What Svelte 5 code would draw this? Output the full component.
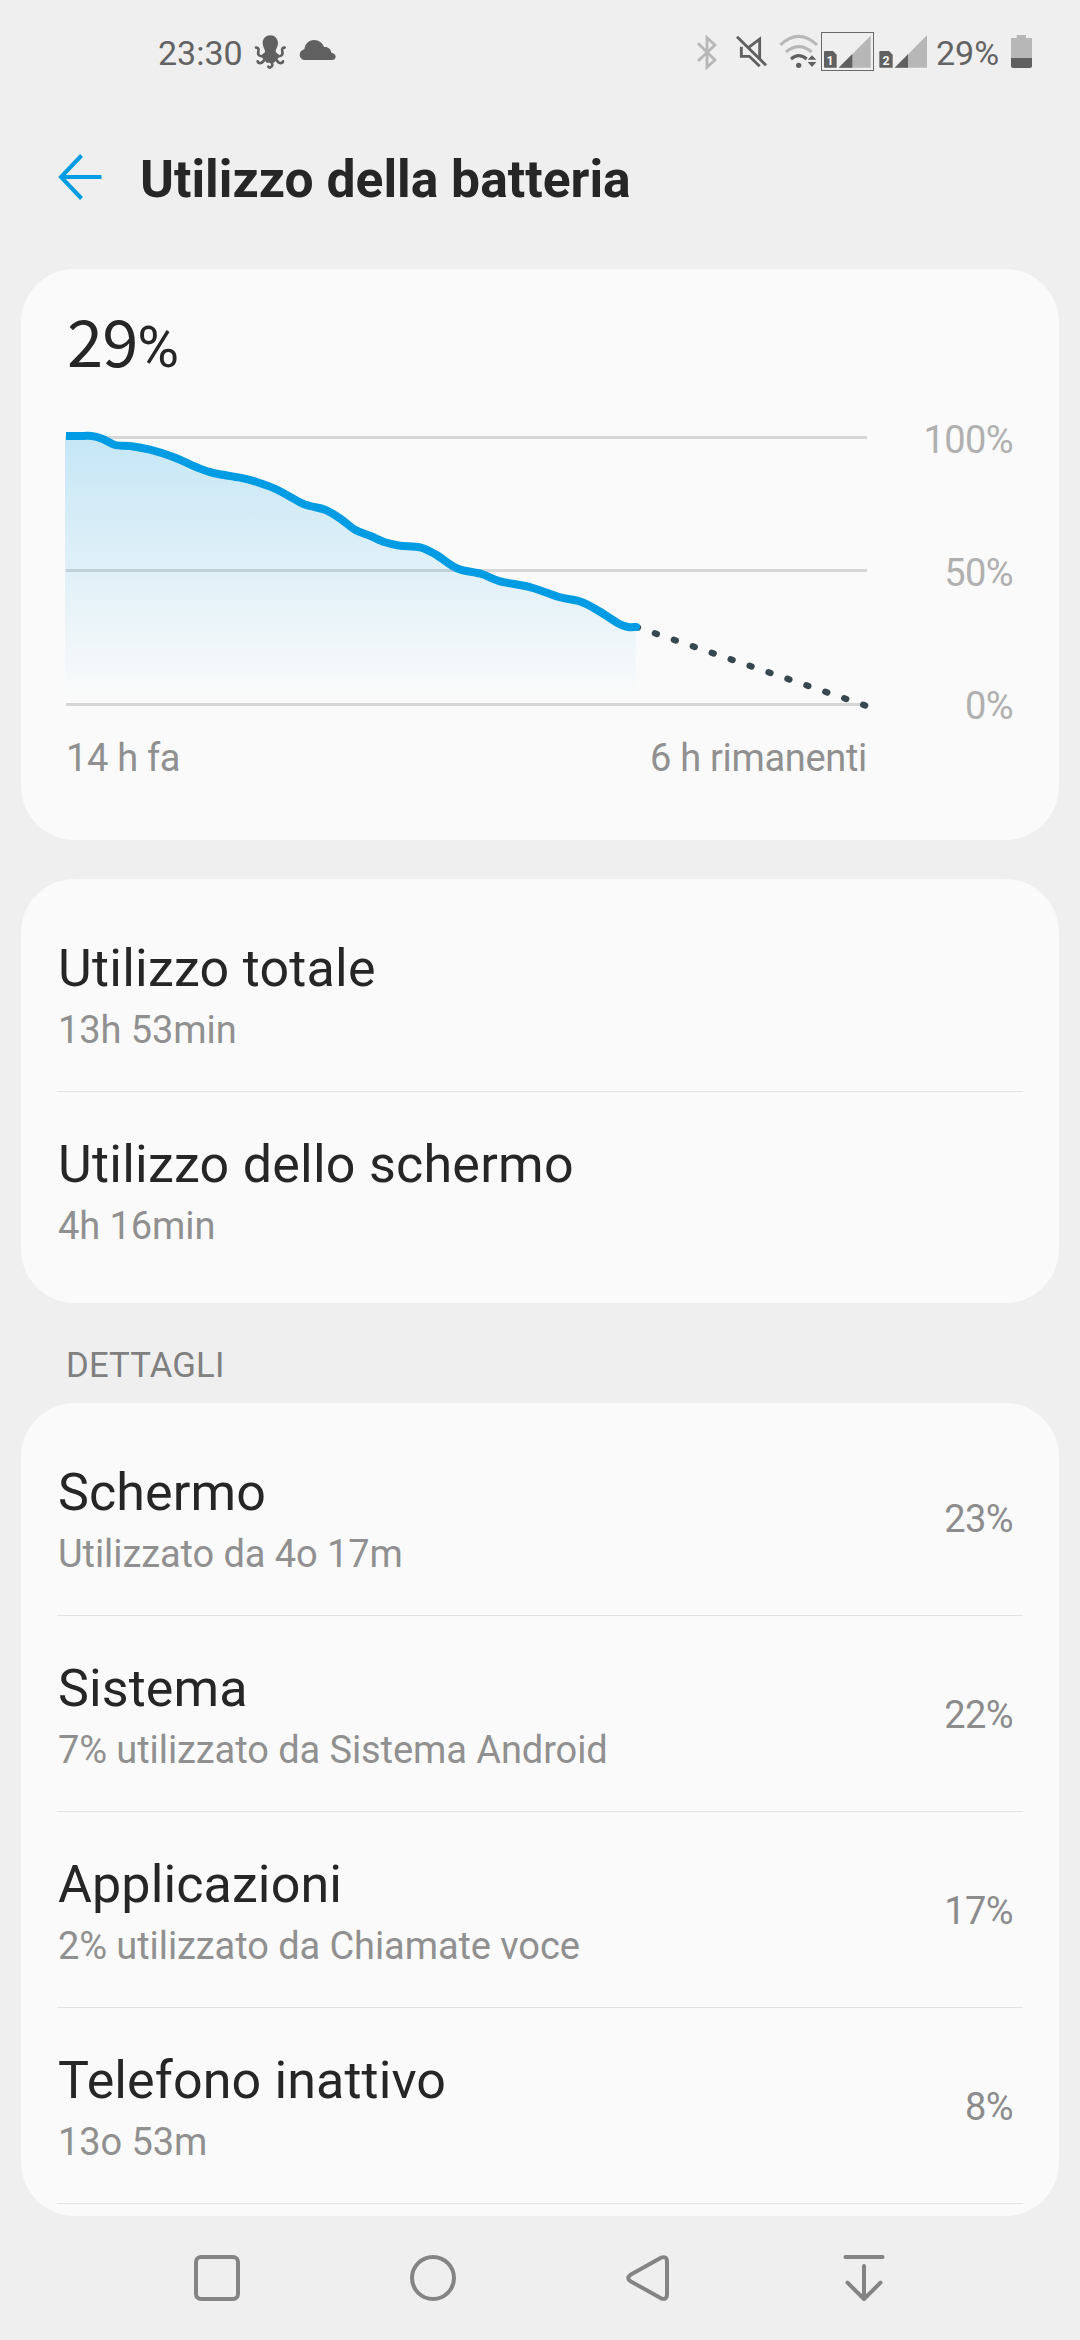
<script>
  const totals = [
    { title: 'Utilizzo totale', note: '13h 53min' },
    { title: 'Utilizzo dello schermo', note: '4h 16min' }
  ];

  const details = [
    { title: 'Schermo', note: 'Utilizzato da 4o 17m', share: '23%' },
    { title: 'Sistema', note: '7% utilizzato da Sistema Android', share: '22%' },
    { title: 'Applicazioni', note: '2% utilizzato da Chiamate voce', share: '17%' },
    { title: 'Telefono inattivo', note: '13o 53m', share: '8%' }
  ];

  // Battery level samples, in chart units
  const points = [
    [-10, 9], [12, 9], [25.5, 9], [36, 11.7], [49, 18], [64, 19], [84, 22.7], [107.3, 30],
    [130.7, 40.3], [147.3, 46], [174, 50.7], [190.7, 55], [210.7, 62.5], [234, 75.3],
    [244, 79], [259, 82.7], [274, 91.3], [289, 102.7], [304, 108.7], [319, 115.3],
    [334, 118.7], [354, 120.3], [369, 127], [387.3, 139.5], [397.3, 143.3], [415.7, 147],
    [434, 154.3], [464.7, 160.3], [493, 170], [513.5, 174.3], [530, 182.3], [552.4, 196.5],
    [562, 200], [570, 200]
  ];

  function smooth(p) {
    let d = `M${p[0][0]} ${p[0][1]}`;
    for (let i = 0; i < p.length - 1; i++) {
      const a = p[i - 1] ?? p[i];
      const b = p[i];
      const c = p[i + 1];
      const e = p[i + 2] ?? c;
      d += `C${b[0] + (c[0] - a[0]) / 6} ${b[1] + (c[1] - a[1]) / 6} ${c[0] - (e[0] - b[0]) / 6} ${c[1] - (e[1] - b[1]) / 6} ${c[0]} ${c[1]}`;
    }
    return d;
  }

  const line = smooth(points);
  const area = `${line}V276H-10Z`;
</script>

<div class="screen">
  <div class="status">
    <span class="clock">23:30</span>
    <svg class="octopus" viewBox="339 0 105 195" width="35" height="65">
      <path d="M391 46C404 46 414 56 414 70C414 80 408 86 407 93C406 98 415 102 419 107L402 128H380L363 107C368 102 377 98 375 93C374 86 368 80 368 69C368 56 378 46 391 46Z" fill="#606060" />
      <ellipse cx="391" cy="109" rx="26" ry="14" fill="#606060" />
      <g fill="none" stroke="#606060" stroke-width="8" stroke-linecap="round">
        <path d="M372 109C360 110 352 106 355 95C357 87 355 82 348 83" />
        <path d="M410 109C422 110 430 106 427 95C425 87 427 82 434 83" />
        <path d="M380 116C371 117 371 127 363 129C357 130 354 128 353 124" />
        <path d="M402 116C411 117 411 127 419 129C425 130 428 128 429 124" />
        <path d="M391 116C389 126 398 128 397 135C396 142 388 145 385 140" />
      </g>
    </svg>
    <svg class="cloud" viewBox="477 0 114 195" width="38" height="65">
      <path d="M497 120C486 120 479 113 479 104C479 96 485 90 493 88C495 72 506 60 522 60C537 60 548 69 552 81C564 79 573 88 574 98C582 99 587 104 587 110C587 116 582 120 576 120Z" fill="#606060" />
    </svg>
    <div class="system">
      <svg viewBox="51 0 60 195" width="20" height="65">
        <path d="M54 70L105 120L81 142V53L105 75L54 123" fill="none" stroke="#b7b7b7" stroke-width="8.5" />
      </svg>
      <svg class="mute" viewBox="168 0 93 195" width="31" height="65">
        <g fill="none" stroke="#606060" stroke-width="8.5">
          <path d="M184 80V109H208L239 139" />
          <path d="M205 83L239 57V116" />
          <path d="M171 50L258 136" />
        </g>
      </svg>
      <svg class="wifi" viewBox="297 0 117 195" width="39" height="65">
        <g fill="none" stroke-width="9">
          <path d="M301 75Q356 23 411 75" stroke="#b7b7b7" />
          <path d="M318 96Q357 64 395 96" stroke="#b7b7b7" />
          <path d="M333 117Q356 97 380 117" stroke="#606060" />
        </g>
        <circle cx="356" cy="136" r="8" fill="#606060" />
        <path d="M383 119L396 106L409 119ZM383 126H409L396 141Z" fill="#606060" />
      </svg>
      <svg class="sim-one" viewBox="423 0 159 195" width="53" height="65">
        <rect x="424.5" y="37.5" width="156" height="114" fill="none" stroke="#6a6a6a" stroke-width="3" />
        <path d="M435 93H459L470 104V143H435Q432 143 432 140V96Q432 93 435 93Z" fill="#606060" />
        <text x="450" y="135" class="sim">1</text>
        <path d="M476 143L572 47V143Z" fill="#b7b7b7" />
        <path d="M476 143L517 102V143Z" fill="#606060" />
      </svg>
      <svg class="sim-two" viewBox="57 0 144 195" width="48" height="65">
        <path d="M61 93H87L98 104V143H61Q58 143 58 140V96Q58 93 61 93Z" fill="#606060" />
        <text x="78" y="134" class="sim">2</text>
        <path d="M104 143L201 46V143Z" fill="#b7b7b7" />
        <path d="M104 143L144 103V143Z" fill="#606060" />
      </svg>
      <span class="level">29%</span>
      <svg viewBox="453 0 63 195" width="21" height="65">
        <path d="M453 54H470V45H498V54H516V114H453Z" fill="#b7b7b7" />
        <path d="M453 114H516V138Q516 144 510 144H459Q453 144 453 138Z" fill="#606060" />
      </svg>
    </div>
  </div>

  <header>
    <svg viewBox="0 0 46 48" width="46" height="48">
      <path d="M24.5 2.5L4 24L24.5 45.5M4 24H44.5" fill="none" stroke="#009ce3" stroke-width="4" />
    </svg>
    <h1>Utilizzo della batteria</h1>
  </header>

  <section class="card summary">
    <div class="current"><span class="number">29</span><span class="sign">%</span></div>
    <div class="chart-row">
      <div class="chart">
        <svg viewBox="0 0 806 288" width="806" height="288">
          <defs>
            <linearGradient id="fade" gradientUnits="userSpaceOnUse" x1="0" y1="9" x2="0" y2="273">
              <stop offset="0" stop-color="#009de6" stop-opacity="0.21" />
              <stop offset="1" stop-color="#009de6" stop-opacity="0" />
            </linearGradient>
            <clipPath id="plot"><rect x="0" y="0" width="806" height="288" /></clipPath>
            <clipPath id="under"><rect x="-1" y="0" width="571" height="288" /></clipPath>
          </defs>
          <path d="M0 10.5H801M0 143.5H801M0 277.5H801" stroke="#d6d6d6" stroke-width="3" />
          <path d={area} fill="url(#fade)" clip-path="url(#under)" />
          <path d="M570 199.8L799.2 278.5" class="forecast" />
          <path d={line} class="history" clip-path="url(#plot)" />
        </svg>
        <div class="times"><span>14 h fa</span><span>6 h rimanenti</span></div>
      </div>
      <div class="scale"><span>100%</span><span>50%</span><span>0%</span></div>
    </div>
  </section>

  <section class="card totals">
    {#each totals as row}
      <div class="row">
        <div>
          <h2>{row.title}</h2>
          <p>{row.note}</p>
        </div>
      </div>
    {/each}
  </section>

  <h3>DETTAGLI</h3>

  <section class="card details">
    {#each details as row}
      <div class="row">
        <div>
          <h2>{row.title}</h2>
          <p>{row.note}</p>
        </div>
        <span class="share">{row.share}</span>
      </div>
    {/each}
    <div class="row"></div>
  </section>

  <nav>
    <svg viewBox="0 0 50 50" width="50" height="50"><rect x="4" y="4" width="42" height="42" rx="5" /></svg>
    <svg viewBox="0 0 50 50" width="50" height="50"><circle cx="25" cy="25" r="21" /></svg>
    <svg viewBox="0 0 50 50" width="50" height="50"><path d="M38 4.7L7.5 21.8Q3 25 7.5 28.2L38 45.3Q44 47.5 44 41V9Q44 2.5 38 4.7Z" /></svg>
    <svg viewBox="0 0 50 50" width="50" height="50"><path d="M6.5 4H43.5M25 13V45.5M8.5 29.7L25 46L41.5 29.7" /></svg>
  </nav>
</div>

<style>
  :global(body) {
    margin: 0;
    background: #efefef;
  }

  .screen {
    width: 1080px;
    height: 2340px;
    overflow: hidden;
    display: flex;
    flex-direction: column;
    box-sizing: border-box;
    background: #efefef;
    color: #262626;
    font-family: Roboto, 'Liberation Sans', sans-serif;
  }

  svg {
    display: block;
    flex: none;
  }

  h1, h2, h3, p {
    margin: 0;
    font-weight: 400;
    white-space: nowrap;
  }

  .status {
    display: flex;
    align-items: flex-start;
    height: 65px;
    padding: 20px 48px 0 158px;
    color: #636363;
    font-size: 34px;
    line-height: 66px;
  }

  .clock {
    width: 95px;
  }

  .cloud {
    margin-left: 11px;
  }

  .system {
    display: flex;
    margin-left: auto;
  }

  .mute {
    margin-left: 19px;
  }

  .wifi {
    margin-left: 12px;
  }

  .sim-one {
    margin-left: 3px;
  }

  .sim-two {
    margin-left: 5px;
  }

  .sim {
    fill: #f4f4f4;
    font-size: 37px;
    font-weight: 700;
    text-anchor: middle;
  }

  .level {
    width: 75px;
    padding-left: 9px;
  }

  header {
    display: flex;
    align-items: center;
    gap: 37px;
    height: 184px;
    padding-left: 57px;
    box-sizing: border-box;
  }

  h1 {
    margin-top: 5px;
    font-size: 51.6px;
    font-weight: 700;
    line-height: 60px;
  }

  .card {
    flex: none;
    box-sizing: border-box;
    width: 1038px;
    margin: 0 21px;
    padding: 16px 36px;
    border-radius: 54px;
    background: #fafafa;
    overflow: hidden;
  }

  .summary {
    height: 571px;
    margin-bottom: 39px;
    padding: 30px 46px 0 45px;
  }

  .current {
    display: flex;
    align-items: baseline;
    height: 128px;
    padding-left: 1px;
    line-height: 80px;
  }

  .number {
    font-family: 'Noto Sans CJK KR', 'Noto Sans', sans-serif;
    font-size: 65px;
    letter-spacing: -0.9px;
  }

  .sign {
    font-size: 57px;
  }

  .chart-row {
    display: flex;
    justify-content: space-between;
  }

  .chart svg {
    overflow: visible;
  }

  .forecast {
    fill: none;
    stroke: #37474f;
    stroke-width: 6.4;
    stroke-linecap: round;
    stroke-dasharray: 2 18.02;
  }

  .history {
    fill: none;
    stroke: #009ce3;
    stroke-width: 8;
    stroke-linecap: round;
  }

  .times {
    display: flex;
    justify-content: space-between;
    width: 801px;
    margin-top: 21px;
    color: #909090;
    font-size: 38px;
    letter-spacing: -0.32px;
    line-height: 44px;
  }

  .scale {
    display: flex;
    flex-direction: column;
    align-items: flex-end;
    gap: 89px;
    margin-top: -9px;
    color: #b0b0b0;
    font-size: 38px;
    letter-spacing: -0.6px;
    line-height: 44px;
  }

  .row {
    display: flex;
    align-items: center;
    justify-content: space-between;
    box-sizing: border-box;
    height: 196px;
    padding: 5px 10px 0 1px;
  }

  .row + .row {
    border-top: 1px solid #e3e3e3;
    padding-top: 4px;
  }

  h2 {
    font-size: 52px;
    line-height: 60px;
    letter-spacing: 0.12px;
  }

  .totals h2 {
    letter-spacing: 0.25px;
  }

  p {
    margin-top: 9px;
    font-size: 38px;
    letter-spacing: -0.08px;
    line-height: 44px;
    color: #909090;
  }

  .share {
    margin-top: -1px;
    color: #8c8c8c;
    font-size: 38px;
    letter-spacing: -0.6px;
    line-height: 44px;
  }

  h3 {
    height: 100px;
    padding: 42px 0 0 66px;
    box-sizing: border-box;
    color: #808080;
    font-size: 34.7px;
    letter-spacing: 0.15px;
    line-height: 40px;
  }

  .details {
    height: 813px;
  }

  nav {
    display: flex;
    gap: 165.5px;
    padding: 37px 0 0 192px;
  }

  nav svg {
    fill: none;
    stroke: #848484;
    stroke-width: 4;
    stroke-linecap: round;
    stroke-linejoin: round;
  }
</style>
